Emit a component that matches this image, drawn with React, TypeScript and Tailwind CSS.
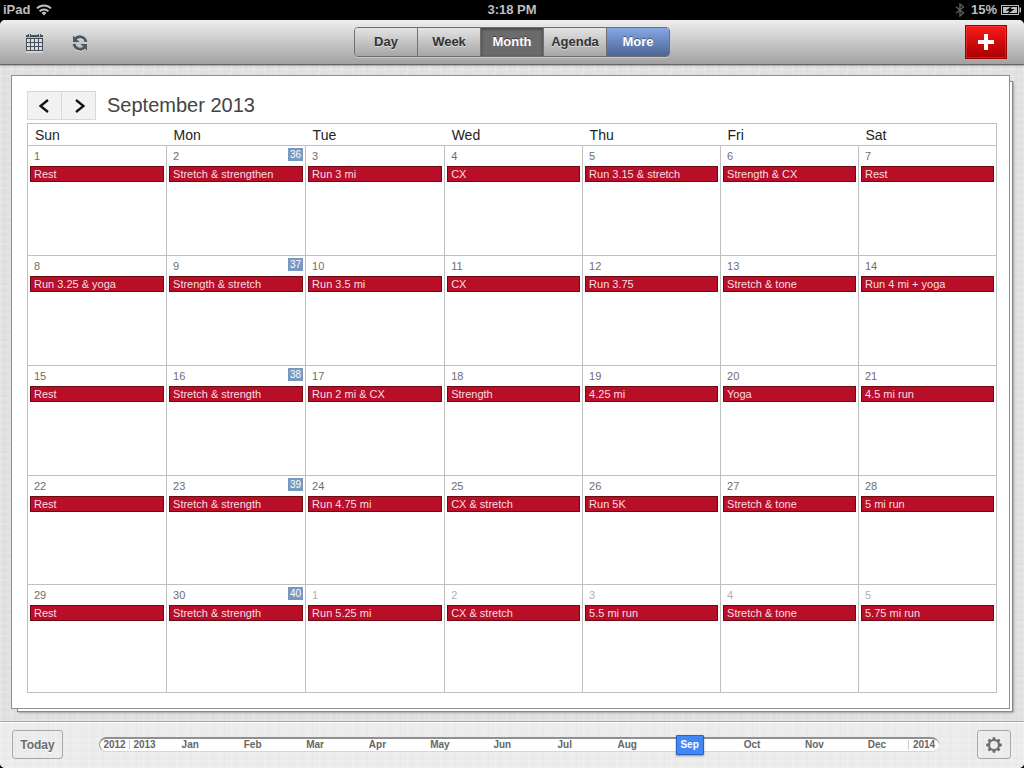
import React from "react";

type Day = { date: number; event: string; week?: number; outside?: boolean };

const weekdays = ["Sun", "Mon", "Tue", "Wed", "Thu", "Fri", "Sat"];

const weeks: Day[][] = [
  [
    { date: 1, event: "Rest" },
    { date: 2, event: "Stretch & strengthen", week: 36 },
    { date: 3, event: "Run 3 mi" },
    { date: 4, event: "CX" },
    { date: 5, event: "Run 3.15 & stretch" },
    { date: 6, event: "Strength & CX" },
    { date: 7, event: "Rest" },
  ],
  [
    { date: 8, event: "Run 3.25 & yoga" },
    { date: 9, event: "Strength & stretch", week: 37 },
    { date: 10, event: "Run 3.5 mi" },
    { date: 11, event: "CX" },
    { date: 12, event: "Run 3.75" },
    { date: 13, event: "Stretch & tone" },
    { date: 14, event: "Run 4 mi + yoga" },
  ],
  [
    { date: 15, event: "Rest" },
    { date: 16, event: "Stretch & strength", week: 38 },
    { date: 17, event: "Run 2 mi & CX" },
    { date: 18, event: "Strength" },
    { date: 19, event: "4.25 mi" },
    { date: 20, event: "Yoga" },
    { date: 21, event: "4.5 mi run" },
  ],
  [
    { date: 22, event: "Rest" },
    { date: 23, event: "Stretch & strength", week: 39 },
    { date: 24, event: "Run 4.75 mi" },
    { date: 25, event: "CX & stretch" },
    { date: 26, event: "Run 5K" },
    { date: 27, event: "Stretch & tone" },
    { date: 28, event: "5 mi run" },
  ],
  [
    { date: 29, event: "Rest" },
    { date: 30, event: "Stretch & strength", week: 40 },
    { date: 1, event: "Run 5.25 mi", outside: true },
    { date: 2, event: "CX & stretch", outside: true },
    { date: 3, event: "5.5 mi run", outside: true },
    { date: 4, event: "Stretch & tone", outside: true },
    { date: 5, event: "5.75 mi run", outside: true },
  ],
];

const rowHeights = ["h-[110px]", "h-[110px]", "h-[110px]", "h-[109px]", "h-[108px]"];

const months = ["Jan", "Feb", "Mar", "Apr", "May", "Jun", "Jul", "Aug", "Sep", "Oct", "Nov", "Dec"];

const views = ["Day", "Week", "Month", "Agenda", "More"];

const linen =
  "bg-[repeating-linear-gradient(0deg,rgba(255,255,255,0.16)_0_1px,transparent_1px_3px,rgba(0,0,0,0.012)_3px_4px,transparent_4px_7px),repeating-linear-gradient(90deg,rgba(255,255,255,0.2)_0_1px,transparent_1px_4px,rgba(0,0,0,0.014)_4px_5px,transparent_5px_11px)]";

function StatusBar() {
  return (
    <div className="grid h-5 grid-cols-3 items-center bg-black px-[3px] text-[13px] font-bold text-[#bfbfbf]">
      <div className="flex items-center gap-1.5">
        <span>iPad</span>
        <svg width="16" height="12" viewBox="0 0 16 12" fill="none" stroke="#bfbfbf" strokeWidth="2" aria-hidden="true">
          <path d="M1 4.4a10 10 0 0 1 14 0" />
          <path d="M3.6 7.2a6.3 6.3 0 0 1 8.8 0" />
          <path d="M8 11.6 5.5 9a3.6 3.6 0 0 1 5 0z" fill="#bfbfbf" stroke="none" />
        </svg>
      </div>
      <div className="text-center">3:18 PM</div>
      <div className="flex items-center justify-end">
        <svg className="mr-1.5" width="10" height="14" viewBox="0 0 10 14" fill="none" stroke="#5c5c5c" strokeWidth="1.4" aria-hidden="true">
          <path d="M1 3.8 8.5 10 5 13V1l3.5 3L1 10.2" />
        </svg>
        <span className="mr-1">15%</span>
        <svg width="20" height="10" viewBox="0 0 20 10" aria-hidden="true">
          <rect x="0.5" y="0.5" width="17" height="9" fill="none" stroke="#bfbfbf" />
          <rect x="2" y="2" width="14" height="6" fill="#bfbfbf" />
          <path d="M18.5 2.5h1.5v5h-1.5z" fill="#bfbfbf" />
          <path d="M11 1.2 4.5 5.8h3.700L6.500 9l7.200-4.900H9.800z" fill="#000" />
        </svg>
      </div>
    </div>
  );
}

function CalendarIcon() {
  return (
    <svg width="18" height="20" viewBox="0 0 18 20" aria-hidden="true">
      <path d="M0 19h17" stroke="#eee" />
      <path d="M0 2h2v-1h3v1h7v-1h3v1h2v16H0z" fill="#46505b" />
      <path d="M3 0.5h1v3H3zM13 0.5h1v3h-1z" fill="#d0d0d0" />
      <path d="M0 4h17v1H0z" fill="#b8babc" />
      <g fill="#dcdcdc">
        {[6, 10, 14].map((y) =>
          [1, 5, 9, 13].map((x) => <rect key={`${x}-${y}`} x={x} y={y} width="3" height="3" />),
        )}
      </g>
    </svg>
  );
}

function RefreshIcon() {
  return (
    <svg width="18" height="18" viewBox="0 0 18 18" aria-hidden="true">
      <g fill="none" stroke="#e8e8e8" strokeWidth="2.4" transform="translate(0 1)">
        <path d="M4 5.200A6.200 6.200 0 0 1 15 8" />
        <path d="M14 12.800A6.200 6.200 0 0 1 3 10" />
      </g>
      <g fill="none" stroke="#4d5862" strokeWidth="2.8">
        <path d="M4 5.200A6.200 6.200 0 0 1 15 8" />
        <path d="M14 12.800A6.200 6.200 0 0 1 3 10" />
      </g>
      <path d="M2 1.500v6.500h6.500z" fill="#4d5862" />
      <path d="M16 16.500V10H9.500z" fill="#4d5862" />
    </svg>
  );
}

function Toolbar() {
  return (
    <header className="grid h-[45px] grid-cols-[1fr_auto_1fr] items-center rounded-t-[5px] border-b border-[#666] bg-linear-to-b from-[#efefef] to-[#a2a2a2] shadow-[0_1px_1px_rgba(0,0,0,0.25)]">
      <div className="flex items-center gap-[27px] pt-0.5 pl-[26px]">
        <button type="button" aria-label="Calendars">
          <CalendarIcon />
        </button>
        <button type="button" aria-label="Refresh">
          <RefreshIcon />
        </button>
      </div>
      <nav className="flex h-[30px] overflow-hidden rounded-[4px] border border-[#707070] text-[13px] font-bold shadow-[0_1px_0_rgba(255,255,255,0.35)]">
        {views.map((view) => {
          const tone =
            view === "Month"
              ? "bg-[#6b6b6b] text-white shadow-[inset_0_1px_3px_rgba(0,0,0,0.5)] [text-shadow:0_-1px_0_rgba(0,0,0,0.5)]"
              : view === "More"
                ? "bg-linear-to-b from-[#86a8e6] to-[#4c6596] text-white [text-shadow:0_-1px_0_rgba(0,0,0,0.4)]"
                : "bg-linear-to-b from-[#e4e4e4] to-[#a6a6a6] text-[#333] [text-shadow:0_1px_0_rgba(255,255,255,0.5)]";
          return (
            <button
              key={view}
              type="button"
              className={`w-[63px] border-r border-[#707070] last:w-[62px] last:border-r-0 ${tone}`}
            >
              {view}
            </button>
          );
        })}
      </nav>
      <div className="flex justify-end pr-[17px]">
        <button
          type="button"
          aria-label="Add event"
          className="flex h-[34px] w-[42px] items-center justify-center border border-[#900] bg-linear-to-b from-[#fb1a1a] to-[#a80000] shadow-[inset_0_0_0_1px_rgba(255,90,90,0.35)]"
        >
          <svg width="16" height="16" viewBox="0 0 16 16" aria-hidden="true">
            <path d="M6 0h4v6h6v4h-6v6H6v-6H0V6h6z" fill="#fff" />
          </svg>
        </button>
      </div>
    </header>
  );
}

function MonthHeader() {
  return (
    <div className="flex h-[29px] items-start gap-[11px]">
      <div className="flex h-[29px] w-[69px] border border-[#d9d9d9] bg-[#f2f2f2]">
        <button type="button" aria-label="Previous month" className="flex flex-1 items-center justify-center border-r border-[#d9d9d9]">
          <svg width="12" height="14" viewBox="0 0 12 14" fill="none" stroke="#111" strokeWidth="2.3" aria-hidden="true">
            <path d="M9 1 1.500 7l7.500 6" />
          </svg>
        </button>
        <button type="button" aria-label="Next month" className="flex flex-1 items-center justify-center">
          <svg width="12" height="14" viewBox="0 0 12 14" fill="none" stroke="#111" strokeWidth="2.3" aria-hidden="true">
            <path d="m3 1 7.500 6-7.500 6" />
          </svg>
        </button>
      </div>
      <h1 className="text-[20px] leading-7 text-[#444]">September 2013</h1>
    </div>
  );
}

function DayCell({ day }: { day: Day }) {
  return (
    <td className="border border-[#bfbfbf] p-0 align-top">
      <div className="flex h-5 items-start justify-between pr-0.5 pl-1.5">
        <span className={`text-[11px] leading-5 ${day.outside ? "text-[#b0b0b0]" : "text-[#6e6e6e]"}`}>{day.date}</span>
        {day.week && (
          <span className="mt-0.5 h-[13px] w-[15px] bg-[#7799bf] text-center text-[10px] leading-[13px] text-white">{day.week}</span>
        )}
      </div>
      <div className="px-0.5">
        <button
          type="button"
          className="block h-4 w-full truncate border border-[#6e0a12] bg-[#b90e28] px-[3px] text-left text-[11px] leading-[14px] text-[#f6dfe2]"
        >
          {day.event}
        </button>
      </div>
    </td>
  );
}

function MonthTable() {
  return (
    <table className="mt-[3px] w-full table-fixed border-collapse">
      <colgroup>
        <col span={3} className="w-[14.35%]" />
        <col span={4} />
      </colgroup>
      <thead>
        <tr>
          {weekdays.map((name) => (
            <th
              key={name}
              scope="col"
              className="h-[22px] border-y border-[#bfbfbf] p-0 pl-[7px] text-left text-[14px] leading-5 font-normal text-[#222] first:border-l last:border-r"
            >
              {name}
            </th>
          ))}
        </tr>
      </thead>
      <tbody>
        {weeks.map((days, index) => (
          <tr key={days[0].date} className={rowHeights[index]}>
            {days.map((day) => (
              <DayCell key={day.date} day={day} />
            ))}
          </tr>
        ))}
      </tbody>
    </table>
  );
}

function GearIcon() {
  return (
    <svg width="16" height="16" viewBox="-8 -8 16 16" aria-hidden="true">
      <circle r="5" fill="none" stroke="#6b6b6b" strokeWidth="2.2" />
      {[0, 45, 90, 135, 180, 225, 270, 315].map((angle) => (
        <path key={angle} d="M-1.7-5.5-1.2-7.8h2.4l0.5 2.3z" fill="#6b6b6b" transform={`rotate(${angle})`} />
      ))}
    </svg>
  );
}

function Timeline() {
  return (
    <nav
      aria-label="Timeline"
      className="flex h-[15px] flex-1 items-center rounded-full border-t-2 border-b border-l border-t-[#909090] border-b-[#d6d6d6] border-l-[#999] bg-white text-[10px] leading-3 font-bold text-[#666]"
    >
      <button type="button" className="h-2.5 w-[30px] border-r border-[#ccc] leading-[10px]">2012</button>
      <button type="button" className="w-[29px] leading-[10px]">2013</button>
      <div className="flex h-full flex-1 items-center">
        {months.map((month) => (
          <div key={month} className="flex flex-1 justify-center">
            <button
              type="button"
              className={
                month === "Sep"
                  ? "h-5 w-7 rounded-[1px] border border-[#2b62c4] bg-[#4387f5] text-white shadow-[0_1px_2px_rgba(0,0,0,0.4)]"
                  : "leading-[10px]"
              }
            >
              {month}
            </button>
          </div>
        ))}
      </div>
      <button type="button" className="h-2.5 w-[31px] border-l border-[#ccc] leading-[10px]">2014</button>
    </nav>
  );
}

export default function App() {
  return (
    <div className="flex min-h-screen flex-col bg-black font-['Liberation_Sans',Arial,sans-serif]">
      <StatusBar />
      <div className="flex flex-1 flex-col overflow-hidden rounded-[5px] bg-[#e1e1e1]">
        <Toolbar />
        <main className={`flex flex-1 flex-col pt-2.5 pr-3.5 pb-3 pl-[11px] ${linen}`}>
          <div className="relative flex flex-1 flex-col">
            {/* Second sheet peeking out from beneath the page */}
            <div className="absolute top-1.5 -right-[3px] -bottom-[3px] left-1.5 border border-[#888] bg-white shadow-[1px_1px_2px_rgba(0,0,0,0.3)]" />
            <section className="relative flex flex-1 flex-col border border-[#909090] bg-white pt-[15px] pr-3 pb-[15px] pl-[15px]">
              <MonthHeader />
              <MonthTable />
            </section>
          </div>
        </main>
        <footer className={`flex h-[47px] items-center border-t border-[#a3a3a3] bg-[#ececec] pr-[13px] pb-px pl-3 shadow-[inset_0_1px_0_#fff] ${linen}`}>
          <button
            type="button"
            className="mr-9 h-[29px] w-[51px] rounded-[3px] border border-[#a8a8a8] text-[12px] font-bold text-[#6b6b6b] [text-shadow:0_1px_0_#fff]"
          >
            Today
          </button>
          <Timeline />
          <button
            type="button"
            aria-label="Settings"
            className="ml-[38px] flex h-[29px] w-[34px] items-center justify-center rounded-[3px] border border-[#a8a8a8]"
          >
            <GearIcon />
          </button>
        </footer>
      </div>
    </div>
  );
}
